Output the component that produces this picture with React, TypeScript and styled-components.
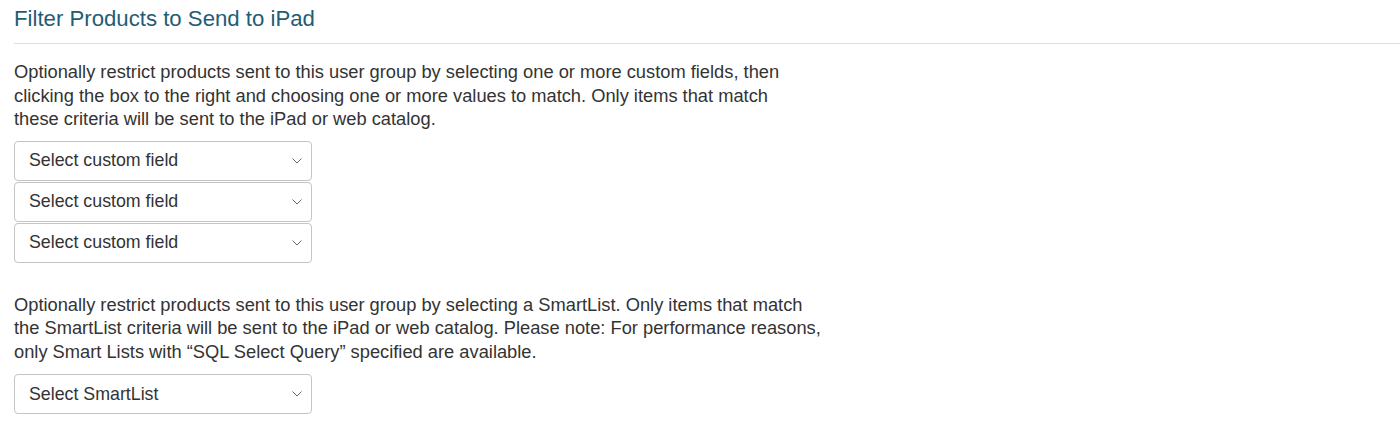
import styled, { createGlobalStyle } from 'styled-components'

const GlobalStyle = createGlobalStyle`
    body {
        margin: 0;
        background: #fff;
        font-family: "Liberation Sans", Arial, sans-serif;
        color: #333;
    }
`

const Section = styled.div`
    padding: 6px 0 0 14px;
`

const Heading = styled.h3`
    margin: 0;
    padding-bottom: 12px;
    border-bottom: 1px solid #dedede;
    font-size: 22.2px;
    font-weight: normal;
    line-height: 25px;
    color: #1f5d76;
`

const Text = styled.p<{ $top: number }>`
    margin: ${(p) => p.$top}px 0 0;
    white-space: nowrap;
    font-size: 18.3px;
    line-height: 23.5px;
`

const SelectStack = styled.div<{ $top: number }>`
    display: flex;
    flex-direction: column;
    gap: 1px;
    margin-top: ${(p) => p.$top}px;
    width: 298px;
`

const SelectBox = styled.div`
    display: flex;
    align-items: center;
    justify-content: space-between;
    height: 40px;
    box-sizing: border-box;
    padding: 0 8px 0 14px;
    border: 1px solid #c4c4c4;
    border-radius: 4px;
    background: #fff;
    font-size: 17.8px;
    color: #333;
`

const Chevron = () => (
    <svg width="12" height="8" viewBox="0 0 12 8">
        <path d="M1.5 1.5 L6 6 L10.5 1.5" fill="none" stroke="#666" strokeWidth="1" />
    </svg>
)

function Select({ label }: { label: string }) {
    return (
        <SelectBox>
            <span>{label}</span>
            <Chevron />
        </SelectBox>
    )
}

export default function App() {
    return (
        <>
            <GlobalStyle />
            <Section>
                <Heading>Filter Products to Send to iPad</Heading>
                <Text $top={16}>
                    Optionally restrict products sent to this user group by selecting one or more custom fields, then<br />
                    clicking the box to the right and choosing one or more values to match. Only items that match<br />
                    these criteria will be sent to the iPad or web catalog.
                </Text>
                <SelectStack $top={10}>
                    <Select label="Select custom field" />
                    <Select label="Select custom field" />
                    <Select label="Select custom field" />
                </SelectStack>
                <Text $top={30}>
                    Optionally restrict products sent to this user group by selecting a SmartList. Only items that match<br />
                    the SmartList criteria will be sent to the iPad or web catalog. Please note: For performance reasons,<br />
                    only Smart Lists with “SQL Select Query” specified are available.
                </Text>
                <SelectStack $top={11}>
                    <Select label="Select SmartList" />
                </SelectStack>
            </Section>
        </>
    )
}
